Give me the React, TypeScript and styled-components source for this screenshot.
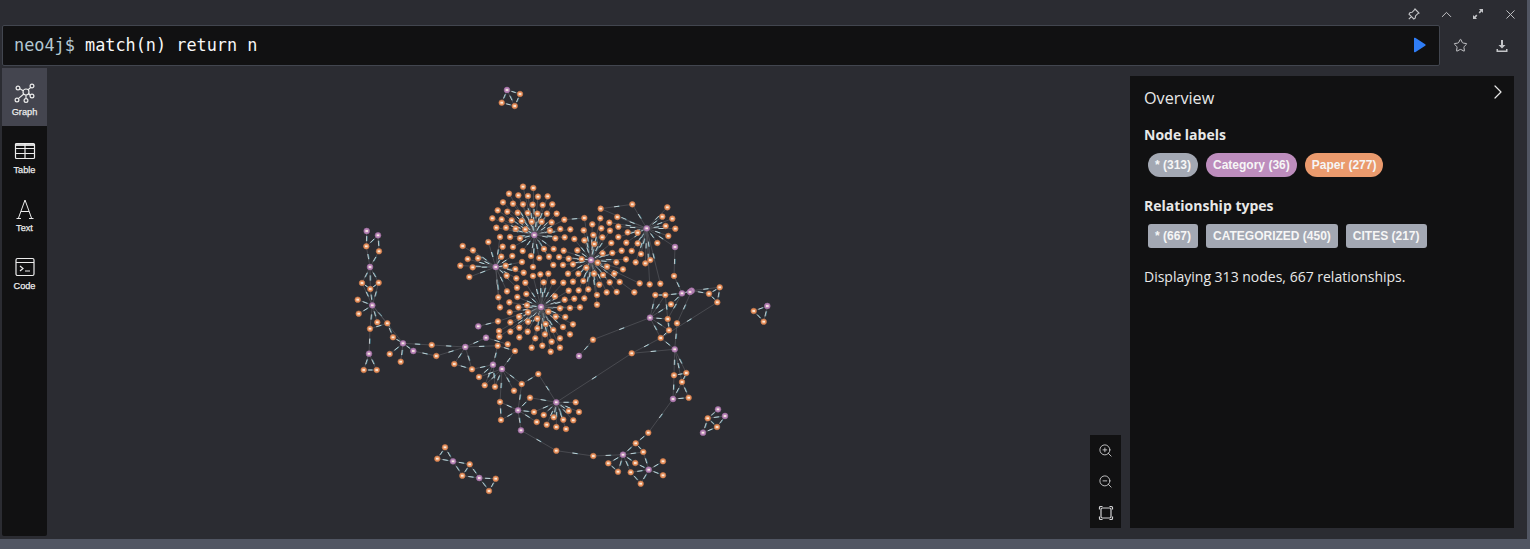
import styled, {createGlobalStyle} from "styled-components";
import {Star, X, ChevronUp, ChevronRight, ZoomIn, ZoomOut} from "lucide-react";

type Pt = [number, number];

const GlobalStyle = createGlobalStyle`
  html, body {
    margin: 0;
    padding: 0;
    background: #2b2c32;
  }
`;

const Frame = styled.div`
  box-sizing: border-box;
  width: 1530px;
  height: 549px;
  background: #2b2c32;
  border-right: 3px solid #515663;
  border-bottom: 10px solid #515663;
  display: flex;
  flex-direction: column;
  overflow: hidden;
`;

const TitleBar = styled.div`
  height: 25px;
  display: flex;
  justify-content: flex-end;
  align-items: flex-start;
  padding-right: 1px;
`;

const TitleButton = styled.div`
  width: 32px;
  height: 28px;
  display: flex;
  align-items: center;
  justify-content: center;
  color: #c4c5c8;
`;

const EditorRow = styled.div`
  height: 41px;
  display: flex;
  align-items: stretch;
  padding-left: 2px;
`;

const Editor = styled.div`
  box-sizing: border-box;
  width: 1438px;
  background: #111112;
  border: 1px solid #42464f;
  border-radius: 2px;
  display: flex;
  align-items: center;
  justify-content: space-between;
  padding: 0 13px 2px 11px;
  font-family: "DejaVu Sans Mono", "Liberation Mono", monospace;
  font-size: 16.85px;
  color: #f8f8f8;
  white-space: pre;
`;

const Prompt = styled.span`
  color: #b4c8d2;
`;

const EditorActions = styled.div`
  flex: 1;
  display: flex;
  align-items: center;
  color: #c4c5c8;
`;

const ActionButton = styled.div`
  width: 41px;
  display: flex;
  justify-content: center;
`;

const Body = styled.div`
  margin-top: 2px;
  height: 468px;
  display: flex;
  padding-left: 2px;
`;

const Sidebar = styled.nav`
  width: 45px;
  background: #111112;
  border-radius: 0 0 2px 2px;
  display: flex;
  flex-direction: column;
`;

const Tab = styled.div<{$active?: boolean}>`
  height: 58px;
  background: ${(p) => (p.$active ? "#44454f" : "transparent")};
  color: #ececec;
  display: flex;
  flex-direction: column;
  align-items: center;
  padding-top: 13px;
  box-sizing: border-box;
  gap: 2px;
  font-family: "Liberation Sans", Arial, sans-serif;
  font-size: 9.2px;
  font-weight: 400;
  -webkit-text-stroke: 0.25px #ececec;
  line-height: 11px;
`;

const TabIcon = styled.div`
  height: 24px;
  display: flex;
  align-items: center;
  justify-content: center;
`;

const Canvas = styled.div`
  position: relative;
  flex: 1;
`;

const GraphSvg = styled.svg`
  position: absolute;
  inset: 0;
`;

const ZoomPanel = styled.div`
  position: absolute;
  right: 406px;
  top: 367px;
  width: 31px;
  height: 93px;
  background: #111112;
  color: #d2d2d4;
  display: flex;
  flex-direction: column;
`;

const ZoomButton = styled.div`
  height: 31px;
  display: flex;
  align-items: center;
  justify-content: center;
`;

const Overview = styled.aside`
  position: absolute;
  right: 13px;
  top: 8px;
  box-sizing: border-box;
  width: 384px;
  height: 452px;
  background: #111112;
  padding: 11px 14px;
  font-family: "Open Sans", "Noto Sans", sans-serif;
  color: #e8e8e8;
`;

const CollapseButton = styled.div`
  position: absolute;
  right: 4px;
  top: 4px;
  color: #e8e8e8;
`;

const OverviewTitle = styled.h3`
  margin: 0;
  font-size: 16.2px;
  font-weight: 400;
  line-height: 22px;
`;

const SectionTitle = styled.h4`
  margin: 16px 0 0;
  font-size: 14px;
  font-weight: 700;
  line-height: 20px;
`;

const ChipRow = styled.div`
  display: flex;
  gap: 8px;
  margin: 8px 0 19px 4px;
`;

const Chip = styled.span<{$color: string; $round?: boolean}>`
  height: 24px;
  padding: 0 7px;
  display: flex;
  align-items: center;
  background: ${(p) => p.$color};
  border-radius: ${(p) => (p.$round ? "12px" : "3px")};
  color: #f6f6f6;
  font-family: "Liberation Sans", Arial, sans-serif;
  font-size: 12px;
  font-weight: 700;
  white-space: nowrap;
`;

const Summary = styled.p`
  margin: 17px 0 0;
  font-size: 14px;
  line-height: 20px;
`;

const GraphIcon = () => (
  <svg width="24" height="24" viewBox="0 0 24 24" fill="none" stroke="currentColor" strokeWidth="1.2">
    <circle cx="13" cy="11" r="3" />
    <circle cx="5" cy="7" r="1.9" />
    <circle cx="19" cy="5" r="1.9" />
    <circle cx="19" cy="15" r="1.9" />
    <circle cx="4" cy="19" r="1.9" />
    <circle cx="13" cy="19.500" r="1.9" />
    <path d="M6.800 7.800l3.500 1.900M17.700 6.400l-2.800 2.600M17.200 14.400l-1.500-2M5.300 17.600l5.500-4.600M13 14v3.500" />
  </svg>
);

const TableIcon = () => (
  <svg width="22" height="18" viewBox="0 0 22 18" fill="none" stroke="currentColor" strokeWidth="1.2">
    <rect x="1.500" y="1.500" width="19" height="15" rx="1" />
    <path d="M1.500 6.500h19M1.500 11.500h19M11 1.500v15" />
    <path d="M1.500 3h19" strokeWidth="1.800" />
  </svg>
);

// thin serif A of the Text tab, drawn as an icon; the tab's label below it stays real text
const TextIcon = () => (
  <svg width="20" height="22" viewBox="0 0 20 22" fill="none" stroke="currentColor" strokeWidth="1">
    <path d="M10 2L3.500 20M10 2l6.500 18M6 13.500h8M1.500 20.500h4.500M14 20.500h4.500" />
  </svg>
);

const CodeIcon = () => (
  <svg width="22" height="20" viewBox="0 0 22 20" fill="none" stroke="currentColor" strokeWidth="1.2">
    <rect x="2" y="1.500" width="18" height="17" rx="1.500" />
    <path d="M2 5.500h18M6 9l3 2.500L6 14M11 14h5" />
  </svg>
);

const PinIcon = () => (
  <svg width="12" height="12" viewBox="0 0 12 12" fill="none" stroke="currentColor" strokeWidth="1.1">
    <path d="M7 1l4 4-1.200.6-2.300 2.300-.2 2L5.800 11 1 6.200l1.100-1.700 2-.2 2.300-2.300zM3.400 8.600L.8 11.200" />
  </svg>
);

const ExpandIcon = () => (
  <svg width="12" height="12" viewBox="0 0 12 12" fill="currentColor">
    <path d="M7 1h4v4L9.600 3.600 7.800 5.400 6.600 4.200l1.800-1.800zM5 11H1V7l1.400 1.400 1.800-1.800 1.200 1.200-1.800 1.800z" />
  </svg>
);

const DownloadIcon = () => (
  <svg width="14" height="14" viewBox="0 0 14 14" fill="currentColor">
    <path d="M6 1h2v5h2.500L7 9.500 3.500 6H6zM1.500 10H3v1.500h8V10h1.500v3h-11z" />
  </svg>
);

const PlayIcon = () => (
  <svg width="14" height="16" viewBox="0 0 14 16">
    <path d="M2 1.500v13a.8.800 0 0 0 1.200.7l10-6.500a.8.800 0 0 0 0-1.400l-10-6.500A.8.800 0 0 0 2 1.500z" fill="#2f7df6" />
  </svg>
);

const FitIcon = () => (
  <svg width="16" height="16" viewBox="0 0 16 16" fill="none" stroke="currentColor" strokeWidth="1.2">
    <rect x="3" y="3" width="10" height="10" rx="1.500" />
    <path d="M1.500 4.500V2.500a1 1 0 0 1 1-1h2M11.500 1.500h2a1 1 0 0 1 1 1v2M14.500 11.500v2a1 1 0 0 1-1 1h-2M4.500 14.500h-2a1 1 0 0 1-1-1v-2" />
  </svg>
);

// central blob, read off the reference at 3x around (450,175)
const blob: Pt[] = (
  [
    [219,35],[250,39],[177,56],[205,61],[234,63],[264,65],[293,64],[159,82],[189,86],[219,88],[248,89],[278,90],[307,88],
    [143,106],[172,110],[203,113],[233,114],[262,116],[291,116],[320,116],[127,130],[155,133],[185,136],[215,138],[245,140],
    [275,140],[305,142],[343,134],[403,129],[452,101],[547,88],[652,97],[502,126],[451,130],[427,148],[478,143],[505,155],
    [139,158],[168,158],[197,161],[226,163],[300,167],[331,162],[361,163],[401,166],[454,160],[480,167],[533,172],[563,173],
    [637,125],[667,131],[647,153],[676,161],[655,183],[150,186],[180,186],[210,190],[316,190],[344,187],[373,192],[403,196],
    [430,180],[457,187],[505,186],[529,203],[563,205],[622,204],[115,201],[38,213],[69,226],[158,215],[189,216],[218,228],
    [282,222],[311,222],[341,227],[382,226],[433,207],[484,204],[458,235],[515,227],[545,228],[487,234],[573,237],[601,255],
    [84,250],[53,252],[154,245],[187,243],[216,261],[243,243],[268,249],[297,245],[327,246],[356,251],[395,252],[528,253],
    [499,262],[471,275],[443,263],[557,262],[586,265],[31,272],[68,277],[167,272],[196,282],[249,276],[310,270],[339,270],
    [369,268],[409,278],[519,283],[221,293],[271,298],[295,296],[354,296],[385,296],[432,296],[459,300],[493,296],[58,306],
    [170,302],[199,310],[249,303],[226,323],[281,322],[310,321],[340,323],[369,320],[400,318],[448,329],[479,322],[509,321],
    [569,325],[599,328],[631,326],[171,349],[201,338],[356,347],[415,343],[386,346],[441,360],[470,352],[500,351],[553,352],
    [145,367],[178,382],[202,366],[229,357],[315,364],[344,374],[373,371],[403,370],[150,397],[205,397],[231,391],[330,400],
    [360,399],[390,397],[441,389],[179,412],[207,425],[234,412],[262,431],[295,410],[317,425],[346,426],[144,439],[181,442],
    [234,440],[287,447],[369,448],[147,468],[208,458],[262,460],[233,470],[310,465],[339,456],[181,470],[285,478],[360,478],
    [208,487],[256,490],[305,500],[330,490],[277,512],[245,518],[330,518],[302,530],[148,485],
  ] as Pt[]
).map(([x, y]) => [450 + x / 3, 175 + y / 3] as Pt);

const centralHubs: Pt[] = [
  [534.3, 235],
  [591, 260],
  [541, 307],
  [495.7, 267],
  [646.7, 228.3],
];

const purple: Pt[] = [
  [507, 90], [366.7, 231], [378, 235.3], [370, 267], [372.3, 305.3], [369, 353.7], [403, 343.3], [413.3, 351],
  [465.3, 347], [478.3, 326.3], [486, 337.7], [493, 364.7], [502, 369], [579, 356], [556.3, 402.3], [518, 410.3],
  [521, 430.3], [453, 461.3], [479.3, 478], [623, 454.7], [648.7, 469.7], [650, 317.7], [682, 293.3], [691.7, 290.7],
  [674.7, 349.3], [673, 399], [767.3, 306], [718, 409.3], [725, 416], [703, 432.7], [675, 247], [690, 292],
];

const chains: Pt[][] = [
  [[507, 90], [520, 94], [514.7, 106], [501.7, 102.7], [507, 90], [514.7, 106]],
  [[366.7, 231], [366.3, 246.3], [378, 235.3], [379, 251.3], [370, 267], [366.3, 246.3]],
  [[370, 267], [362, 283], [372.3, 305.3], [378.7, 282.7], [370, 267], [370.3, 289], [372.3, 305.3]],
  [[362, 283], [370.3, 289], [378.7, 282.7]],
  [[357.7, 299.7], [372.3, 305.3], [358.7, 313.7]],
  [[377.3, 322.3], [372.3, 305.3], [387.3, 323.3], [393, 337.3], [403, 343.3], [389.7, 354]],
  [[372.3, 305.3], [370, 328.7], [369, 353.7], [363.7, 370], [376.7, 370], [369, 353.7]],
  [[370, 328.7], [387.3, 323.3]],
  [[372.3, 305.3], [403, 343.3], [400.7, 361.7]],
  [[403, 343.3], [413.3, 351], [436.3, 356], [465.3, 347], [431.7, 345], [403, 343.3]],
  [[465.3, 347], [454.3, 364], [472, 369.3], [465.3, 347], [497.7, 345.7]],
  [[465.3, 347], [486, 337.7], [507.7, 344.3]],
  [[478.3, 326.3], [498, 321.33]],
  [[493, 364.7], [479, 377], [502, 369], [484.7, 385.3], [493, 364.7], [495, 386.7], [502, 369], [514, 390.7]],
  [[493, 364.7], [472, 369.3]],
  [[502, 369], [515, 351], [497.7, 345.7], [493, 364.7]],
  [[502, 369], [521.7, 384], [538.3, 374], [556.3, 402.3], [530, 397.7], [518, 410.3], [521.7, 384]],
  [[502, 369], [500, 402], [501, 420], [518, 410.3], [500, 402]],
  [[518, 410.3], [534, 412], [556.3, 402.3]],
  [[518, 410.3], [536.7, 422]],
  [[518, 410.3], [521, 430.3], [556.3, 450.7], [593.3, 456], [623, 454.7]],
  [[556.3, 402.3], [543.7, 415]], [[556.3, 402.3], [553.7, 417.3]], [[556.3, 402.3], [563.3, 419.7]],
  [[556.3, 402.3], [568.7, 411]], [[556.3, 402.3], [575.7, 402.3]], [[556.3, 402.3], [579, 412]],
  [[556.3, 402.3], [573.3, 420.3]], [[556.3, 402.3], [566, 429]], [[556.3, 402.3], [556.3, 427]],
  [[556.3, 402.3], [546.7, 424.7]],
  [[556.3, 402.3], [631.7, 353.3], [674.7, 349.3]],
  [[631.7, 353.3], [660.7, 338], [650, 317.7], [669, 330.3], [660.7, 338]],
  [[650, 317.7], [667.7, 319], [669, 330.3]],
  [[650, 317.7], [655.3, 295], [665.3, 295], [682, 293.3], [671, 304.3], [650, 317.7]],
  [[650, 317.7], [593, 339.7], [579, 356]],
  [[650, 317.7], [665.3, 295], [667.7, 319], [682, 293.3]],
  [[674, 276], [682, 293.3], [691.7, 290.7], [709, 293.7], [719.7, 287.3], [717.3, 302.3], [709, 293.7]],
  [[691.7, 290.7], [719.7, 287.3]],
  [[691.7, 290.7], [677, 323.3], [674.7, 349.3], [674, 375.3], [673, 399], [688.7, 397.7], [682, 382], [686.3, 373], [674.7, 349.3]],
  [[717.3, 302.3], [660.7, 338]],
  [[674.7, 349.3], [682, 382], [673, 399]],
  [[674, 375.3], [686.3, 373]],
  [[674.7, 349.3], [660.7, 338]],
  [[673, 399], [648.3, 432.7], [635.7, 443.3], [623, 454.7], [608.3, 463.3]],
  [[623, 454.7], [618, 471.7]], [[623, 454.7], [635.3, 463]], [[623, 454.7], [630.7, 472.3]], [[623, 454.7], [643.3, 452]],
  [[635.7, 443.3], [643.3, 452], [648.7, 469.7], [635.3, 463]],
  [[648.7, 469.7], [630.7, 472.3]], [[648.7, 469.7], [640.7, 483.7], [630.7, 472.3]],
  [[648.7, 469.7], [663, 461.3]], [[648.7, 469.7], [663, 475.3]],
  [[608.3, 463.3], [618, 471.7]],
  [[753.7, 311], [767.3, 306], [763.7, 321.7], [753.7, 311]],
  [[718, 409.3], [707.7, 418.3], [703, 432.7], [717, 427], [725, 416]],
  [[707.7, 418.3], [717, 427]], [[707.7, 418.3], [725, 416]],
  [[445, 447.3], [453, 461.3], [437.3, 458.7], [445, 447.3]],
  [[453, 461.3], [469.7, 464.3], [479.3, 478], [462.3, 475.7], [453, 461.3]],
  [[469.7, 464.3], [462.3, 475.7]],
  [[479.3, 478], [495.7, 478.7], [489, 491], [479.3, 478]],
  [[600.67, 208.67], [632.33, 204.33]],
  [[564.33, 219.67], [584.33, 218]],
  [[646.7, 228.3], [675, 247], [674, 276]],
];

const sameKey = ([x, y]: Pt) => `${Math.round(x * 10)},${Math.round(y * 10)}`;

const buildGraph = () => {
  const edges: [Pt, Pt][] = [];
  chains.forEach((chain) => {
    chain.slice(1).forEach((pt, i) => edges.push([chain[i], pt]));
  });
  blob.forEach((pt) => {
    let best = centralHubs[0];
    let bestDist = Infinity;
    centralHubs.forEach((hub) => {
      const d = Math.hypot(hub[0] - pt[0], hub[1] - pt[1]);
      if (d < bestDist) {
        bestDist = d;
        best = hub;
      }
    });
    if (bestDist < 62) edges.push([best, pt]);
  });
  const purpleKeys = new Set([...purple, ...centralHubs].map(sameKey));
  const seen = new Map<string, Pt>();
  [...blob, ...chains.flat()].forEach((pt) => seen.set(sameKey(pt), pt));
  const orange = [...seen.values()].filter((pt) => !purpleKeys.has(sameKey(pt)));
  return {edges, orange, hubs: [...purple, ...centralHubs]};
};

const graph = buildGraph();

const EdgeLine = styled.line`
  stroke: #55565c;
  stroke-width: 0.7;
`;

const EdgeCaption = styled.line<{$tint?: boolean}>`
  stroke: ${(p) => (p.$tint ? "#58c6dc" : "#eef2f2")};
  stroke-width: 0.9;
  opacity: ${(p) => (p.$tint ? 0.55 : 0.8)};
`;

const NodeDot = styled.circle<{$hub?: boolean}>`
  fill: ${(p) => (p.$hub ? "#b884b8" : "#e8935f")};
  stroke: ${(p) => (p.$hub ? "#9a6c9c" : "#c9774a")};
  stroke-width: 0.6;
`;

const NodeCaption = styled.line`
  stroke: #fff3e8;
  stroke-width: 1.8;
  opacity: 0.9;
`;

const GraphDrawing = () => (
  <GraphSvg width="1480" height="468" viewBox="47 68 1480 468">
    {graph.edges.map(([a, b], i) => {
      const mx = (a[0] + b[0]) / 2;
      const my = (a[1] + b[1]) / 2;
      const len = Math.hypot(b[0] - a[0], b[1] - a[1]) || 1;
      const ux = (b[0] - a[0]) / len;
      const uy = (b[1] - a[1]) / len;
      const half = Math.min(2.6, len / 6);
      return (
        <g key={i}>
          <EdgeLine x1={a[0]} y1={a[1]} x2={b[0]} y2={b[1]} />
          <EdgeCaption $tint x1={mx - half * ux + 0.7} y1={my - half * uy} x2={mx + half * ux + 0.7} y2={my + half * uy} />
          <EdgeCaption x1={mx - half * ux} y1={my - half * uy} x2={mx + half * ux} y2={my + half * uy} />
        </g>
      );
    })}
    {graph.orange.map(([x, y], i) => (
      <g key={i}>
        <NodeDot cx={x} cy={y} r={2.8} />
        <NodeCaption x1={x - 1.3} y1={y} x2={x + 1.3} y2={y} />
      </g>
    ))}
    {graph.hubs.map(([x, y], i) => (
      <g key={i}>
        <NodeDot $hub cx={x} cy={y} r={2.9} />
        <NodeCaption x1={x - 1.3} y1={y} x2={x + 1.3} y2={y} />
      </g>
    ))}
  </GraphSvg>
);

const App = () => {
  return (
    <Frame>
      <GlobalStyle />
      <TitleBar>
        <TitleButton><PinIcon /></TitleButton>
        <TitleButton><ChevronUp size={17} strokeWidth={1.4} /></TitleButton>
        <TitleButton><ExpandIcon /></TitleButton>
        <TitleButton><X size={15} strokeWidth={1.5} /></TitleButton>
      </TitleBar>
      <EditorRow>
        <Editor>
          <span>
            <Prompt>neo4j$</Prompt> match(n) return n
          </span>
          <PlayIcon />
        </Editor>
        <EditorActions>
          <ActionButton><Star size={15} strokeWidth={1.6} /></ActionButton>
          <ActionButton><DownloadIcon /></ActionButton>
        </EditorActions>
      </EditorRow>
      <Body>
        <Sidebar>
          <Tab $active>
            <TabIcon><GraphIcon /></TabIcon>
            Graph
          </Tab>
          <Tab>
            <TabIcon><TableIcon /></TabIcon>
            Table
          </Tab>
          <Tab>
            <TabIcon><TextIcon /></TabIcon>
            Text
          </Tab>
          <Tab>
            <TabIcon><CodeIcon /></TabIcon>
            Code
          </Tab>
        </Sidebar>
        <Canvas>
          <GraphDrawing />
          <ZoomPanel>
            <ZoomButton><ZoomIn size={15} strokeWidth={1.4} /></ZoomButton>
            <ZoomButton><ZoomOut size={15} strokeWidth={1.4} /></ZoomButton>
            <ZoomButton><FitIcon /></ZoomButton>
          </ZoomPanel>
          <Overview>
            <CollapseButton><ChevronRight size={24} strokeWidth={1.2} /></CollapseButton>
            <OverviewTitle>Overview</OverviewTitle>
            <SectionTitle>Node labels</SectionTitle>
            <ChipRow>
              <Chip $round $color="#a3a8b3">* (313)</Chip>
              <Chip $round $color="#bd8dbd">Category (36)</Chip>
              <Chip $round $color="#ea9a6d">Paper (277)</Chip>
            </ChipRow>
            <SectionTitle>Relationship types</SectionTitle>
            <ChipRow>
              <Chip $color="#a3a8b3">* (667)</Chip>
              <Chip $color="#a3a8b3">CATEGORIZED (450)</Chip>
              <Chip $color="#a3a8b3">CITES (217)</Chip>
            </ChipRow>
            <Summary>Displaying 313 nodes, 667 relationships.</Summary>
          </Overview>
        </Canvas>
      </Body>
    </Frame>
  );
};

export default App;
